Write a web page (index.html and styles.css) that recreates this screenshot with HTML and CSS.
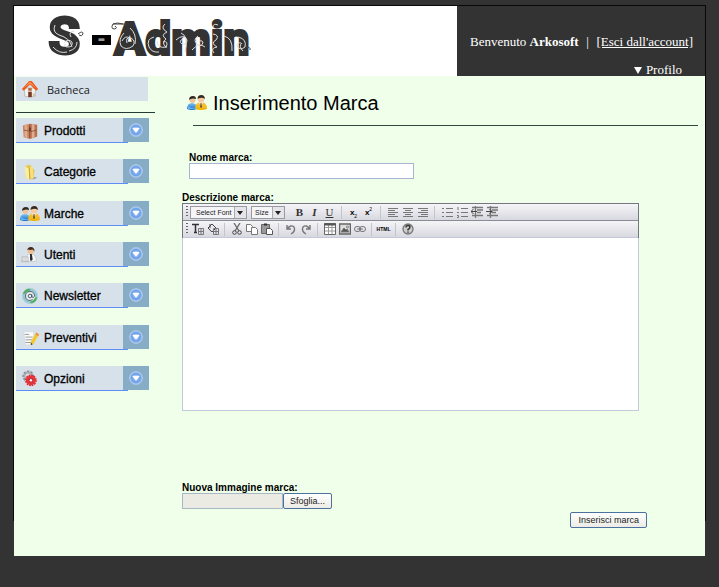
FILE: index.html
```html
<!DOCTYPE html>
<html lang="it">
<head>
<meta charset="utf-8">
<title>S-Admin</title>
<link rel="stylesheet" href="styles.css">
</head>
<body>
<svg class="sprite" aria-hidden="true">
  <defs>
    <linearGradient id="blue" x2="0" y2="1"><stop stop-color="#7cc4f4"/><stop offset="1" stop-color="#1668c0"/></linearGradient>
    <linearGradient id="gold" x2="0" y2="1"><stop stop-color="#f8c850"/><stop offset="1" stop-color="#f0b000"/></linearGradient>
    <radialGradient id="orb"><stop stop-color="#a8ccff"/><stop offset=".7" stop-color="#6c9fe8"/><stop offset="1" stop-color="#a4c4f0"/></radialGradient>
  </defs>
  <symbol id="people" viewBox="0 0 20 16">
    <path d="M0 14q0-6 5-6 5 0 5 6-5 2-10 0z" fill="url(#blue)"/>
    <circle cx="5.500" cy="5" r="3" fill="#efc49c"/><path d="M2 5q0-4 4-4 3 0 3 3-3-1-5 0-1 0-2 1z" fill="#302820"/>
    <path d="M8 14q0-7 6-7 6 0 6 7-6 2-12 0z" fill="url(#gold)"/>
    <path d="M12 7l2 5 2-5z" fill="#fff"/><path d="M13.500 8h1l.5 4-1 1-1-1z" fill="#6a5530"/>
    <circle cx="14" cy="4.500" r="3.200" fill="#f3cba5"/><path d="M10.500 4q0-4 4-4 3 0 3.500 4-3-2-5-1-1 0-2.500 1z" fill="#382a20"/>
    <path d="M1 11q3 3 8 2v1H1z" fill="#62b7f2"/>
  </symbol>
  <symbol id="down" viewBox="0 0 14 14">
    <circle cx="7" cy="7" r="6.300" fill="url(#orb)" stroke="#bcd4f5" stroke-width=".8"/>
    <path d="M3.500 5.500q0-.8 1-.8h5q1 0 1 .8L7 9.800z" fill="#fff"/>
  </symbol>
</svg>

<div class="frame">
  <header class="header">
    <h1 class="logo">
      <span class="logo-s">S</span><span class="logo-dash">-</span><span class="logo-word">Admin</span>
      <svg class="swirls" viewBox="0 0 206 40" aria-hidden="true">
        <path d="M7 8q-3 7 4 10 11 3 13 12M16 26q4-5 8-1 1 5-4 5-4 0-3-3M23 20q-3-5 3-6M21 34q8-2 8-9M5 30q6 7 14 5"/>
        <path d="M76 16q-6 6-3 13 5 5 12 0 3-5-2-8-6-1-4 5M82 11q7 6 5 16M82 21q-5-3-8 3"/>
        <path d="M106 20q-8 2-5 10 3 6 10 5M117 7q-5 4 2 8-7 3-1 7-5 4 0 8-8 2-9-6M115 25q6-2 3 6"/>
        <path d="M128 23q8-7 11 0 0 5-5 4-4-3 1-5M133 16q8 3 4 19M150 19q-6 4 0 9 4 2 5-3-2-3-4 0M144 33q7-8 13-3"/>
        <path d="M165 17q7 1 3 6-6 3 1 7-7 1-3 6M170 8q-5-2-5 2M176 19q9 2 8 15M190 20q9 2 7 10-5 4-8-1 0-4 4-3M195 34q-5-5-1-8"/>
        <path class="ink" d="M75 7q-6-2-10 0-3 5 2 5 3-1 0-3M30 17q5-4 5 0-1 3-4 1M198 30q5 0 4 3"/>
        <path class="ink" d="M65 7h14"/>
      </svg>
    </h1>
    <div class="account">
      <p class="welcome"><span>Benvenuto <strong>Arkosoft</strong></span><span>|</span><a href="#">[Esci dall'account]</a></p>
      <a class="profile" href="#"><svg viewBox="0 0 8 7"><path d="M0 0h8L4 7z" fill="#fff"/></svg>Profilo</a>
    </div>
  </header>

  <div class="body">
    <nav class="sidebar">
      <a class="home" href="#">
        <svg class="pic" viewBox="0 0 20 20"><path d="M4 9h12v9l-6 1-6-1z" fill="#f3f3ee" stroke="#aaa" stroke-width=".7"/><path d="M1 10L9 1h3l7 9-2 2-7-7-7 7z" fill="#f05a18"/><path d="M3 9l7-7 7 7-7-5z" fill="#ff9860"/><path d="M8 13h4v6H8z" fill="#7b3825"/><path d="M8 9h4v3H8z" fill="#b96a45"/><path d="M13 15h3v3l-3 1z" fill="#d6c4b0"/></svg>
        Bacheca</a>
      <ul class="menu">
        <li><a href="#"><svg class="pic" viewBox="0 0 20 20"><path d="M2 4l8-2v17l-7-2z" fill="#c98563"/><path d="M10 2l8 1v13l-8 3z" fill="#b87052"/><path d="M4 3l3-1v16l-3-1zM12 2l3 1v14l-3 1z" fill="#e0ad8c"/><path d="M9.500 3v15M3 9l6 1M10 11l7-2" stroke="#7a4430" stroke-width=".8"/><path d="M9 6h2v4H9z" fill="#6b3b2a"/></svg>Prodotti</a><button type="button" aria-label="Apri Prodotti"><svg><use href="#down"/></svg></button></li>
        <li><a href="#"><svg class="pic" viewBox="0 0 20 20"><path d="M13 15l5 1-3 2h-5z" fill="#9aa6ae"/><path d="M5 3l5-1 5 6-1 9-5 1-4-2z" fill="#e8c755"/><path d="M4 4l5 2v13l-4-3z" fill="#f9eda0"/><path d="M10 4l3 1 1 12-4 1z" fill="#f8df7c"/><path d="M9 5l1 13" stroke="#c79d32"/></svg>Categorie</a><button type="button" aria-label="Apri Categorie"><svg><use href="#down"/></svg></button></li>
        <li><a href="#"><svg class="pic"><use href="#people"/></svg>Marche</a><button type="button" aria-label="Apri Marche"><svg><use href="#down"/></svg></button></li>
        <li><a href="#"><svg class="pic" viewBox="0 0 20 20"><path d="M5 17q0-8 6-8 6 0 6 8z" fill="#f8f8f8" stroke="#bbb" stroke-width=".6"/><path d="M10 9h2l1 6-2 2-1-2z" fill="#29303a"/><circle cx="11" cy="5.500" r="3.400" fill="#edbd8e"/><path d="M7 5q0-4 4-4t4 5l-2-2q-3 1-5 0z" fill="#43291c"/><path d="M1 12h7v5H1z" fill="#dadde0" stroke="#aaa" stroke-width=".6"/><path d="M0 17h9v1H0z" fill="#bbb"/></svg>Utenti</a><button type="button" aria-label="Apri Utenti"><svg><use href="#down"/></svg></button></li>
        <li><a href="#"><svg class="pic" viewBox="0 0 20 20"><circle cx="10" cy="10" r="8.500" fill="#8fc8d4" stroke="#b5d5df"/><path d="M2 8q2-7 9-6l-3 4zM18 11q-1 7-8 7l2-5z" fill="#50b060"/><circle cx="10" cy="10" r="5.800" fill="#e8eeee"/><circle cx="10" cy="10" r="2" fill="none" stroke="#456"/><path d="M12 8v3q2 2 3-1 0-5-5-5t-5 5 5 5l3-1" fill="none" stroke="#456"/></svg>Newsletter</a><button type="button" aria-label="Apri Newsletter"><svg><use href="#down"/></svg></button></li>
        <li><a href="#"><svg class="pic" viewBox="0 0 20 20"><path d="M3 3h11v14l-9 1z" fill="#fafafa" stroke="#d0d0d0" stroke-width=".6"/><path d="M4 6h5M5 9h8M5 12h8M5 15h6" stroke="#8e9599"/><path d="M17 4l3 2-6 10-3 2v-4z" fill="#f7c62b"/><path d="M17 4l3 2-1 2-3-2z" fill="#ee8f45"/><path d="M11 15l2 2-2 1z" fill="#444"/></svg>Preventivi</a><button type="button" aria-label="Apri Preventivi"><svg><use href="#down"/></svg></button></li>
        <li><a href="#"><svg class="pic" viewBox="0 0 20 20"><circle cx="8" cy="7" r="5" fill="none" stroke="#888e94" stroke-width="3" stroke-dasharray="2.500 1.100"/><circle cx="8" cy="7" r="4" fill="none" stroke="#a8adb2" stroke-width="2"/><circle cx="11" cy="11.500" r="5.500" fill="#e8353c"/><circle cx="11" cy="11.500" r="5.800" fill="none" stroke="#e02830" stroke-width="1.500" stroke-dasharray="2 1"/><circle cx="11" cy="11.500" r="2" fill="#fff" stroke="#a81820"/></svg>Opzioni</a><button type="button" aria-label="Apri Opzioni"><svg><use href="#down"/></svg></button></li>
      </ul>
    </nav>

    <main class="content">
      <h2 class="title"><svg><use href="#people"/></svg>Inserimento Marca</h2>
      <form class="form">
        <div class="field name">
          <label for="nome">Nome marca:</label>
          <input id="nome" type="text">
        </div>
        <div class="field">
          <label for="descrizione">Descrizione marca:</label>
          <div class="editor">
            <div class="bar">
              <i class="grip"></i>
              <span class="drop font"><select aria-label="Font"><option>Select Font</option></select></span>
              <span class="drop size"><select aria-label="Size"><option>Size</option></select></span>
              <button type="button" class="serif"><b>B</b></button>
              <button type="button" class="serif"><em>I</em></button>
              <button type="button" class="serif"><u>U</u></button>
              <i class="sep"></i>
              <button type="button" class="script">x<sub>2</sub></button>
              <button type="button" class="script">x<sup>2</sup></button>
              <i class="sep"></i>
              <button type="button" aria-label="Sinistra"><svg viewBox="0 0 12 12"><path d="M1 2.500h10M1 4.500h7M1 6.500h10M1 8.500h7M1 10.500h10"/></svg></button>
              <button type="button" aria-label="Centro"><svg viewBox="0 0 12 12"><path d="M1 2.500h10M3 4.500h6M1 6.500h10M3 8.500h6M1 10.500h10"/></svg></button>
              <button type="button" aria-label="Destra"><svg viewBox="0 0 12 12"><path d="M1 2.500h10M4 4.500h7M1 6.500h10M4 8.500h7M1 10.500h10"/></svg></button>
              <i class="sep"></i>
              <button type="button" aria-label="Elenco"><svg viewBox="0 0 12 12"><path d="M1 2.500h2M5 2.500h7M1 6.500h2M5 6.500h7M1 10.500h2M5 10.500h7"/></svg></button>
              <button type="button" aria-label="Elenco numerato"><svg viewBox="0 0 12 12"><path d="M5 2.500h7M5 6.500h7M5 10.500h7M2 1v3M1 6.500h2M1 9.500h1.500v2H1"/></svg></button>
              <button type="button" aria-label="Riduci rientro"><svg viewBox="0 0 12 12"><path d="M1 1.500h11M6 4h6M6 6.500h4M1 9.500h11M4.500 0v12" stroke-width="1.300"/><path d="M0 5.500h6M2.500 3L0 5.500 2.500 8" stroke="#444"/></svg></button>
              <button type="button" aria-label="Aumenta rientro"><svg viewBox="0 0 12 12"><path d="M1 1.500h11M6 4h6M6 6.500h4M1 9.500h11M4.500 0v12" stroke-width="1.300"/><path d="M0 5.500h6M3.500 3L6 5.500 3.500 8" stroke="#444"/></svg></button>
            </div>
            <div class="bar">
              <i class="grip"></i>
              <button type="button" aria-label="Colore testo"><svg viewBox="0 0 12 12"><path d="M0 1.500h7M3.500 1v8M2 9.500h3" stroke="#333" stroke-width="1.500"/><path d="M6.500 5.500h5v6h-5zM6 8.500h6M9 5v7"/></svg></button>
              <button type="button" aria-label="Colore sfondo"><svg viewBox="0 0 12 12"><path d="M1 5l4-4 4 4-4 4zM3 1v4" stroke="#444"/><path d="M6.500 5.500h5v6h-5zM6 8.500h6M9 5v7"/></svg></button>
              <i class="sep"></i>
              <button type="button" aria-label="Taglia"><svg viewBox="0 0 12 12"><path d="M3 0l5 8M9 0L4 8" stroke="#666" stroke-width="1.300"/><circle cx="3.500" cy="9.500" r="1.800" stroke="#444"/><circle cx="8.500" cy="9.500" r="1.800" stroke="#444"/></svg></button>
              <button type="button" aria-label="Copia"><svg viewBox="0 0 12 12"><path d="M.5 1.500h4l2 2v5h-6z" fill="#fff"/><path d="M5.500 4.500h4l2 2v5h-6z" fill="#fff"/></svg></button>
              <button type="button" aria-label="Incolla"><svg viewBox="0 0 12 12"><path d="M.5 1.500h8v9h-8z" fill="#999" stroke="#666"/><path d="M3 1.500h3" stroke="#333" stroke-width="2"/><path d="M5.500 5.500h4l2 2v4h-6z" fill="#fff" stroke="#555"/></svg></button>
              <i class="sep"></i>
              <button type="button" aria-label="Annulla"><svg viewBox="0 0 12 12"><path d="M2 2v4h4M2 6q4-5 7-2 2 4-3 7" stroke-width="1.400"/></svg></button>
              <button type="button" aria-label="Ripeti"><svg viewBox="0 0 12 12"><path d="M10 2v4H6M10 6Q6 1 3 4q-2 4 3 7" stroke-width="1.400"/></svg></button>
              <i class="sep"></i>
              <button type="button" aria-label="Tabella"><svg viewBox="0 0 12 12"><path d="M.5.5h11v11H.5z" fill="#fff" stroke="#666"/><path d="M1 4.500h10M1 8h10M4.500 2v9M8 2v9" stroke="#999"/><path d="M0 1.500h12" stroke="#555" stroke-width="2"/></svg></button>
              <button type="button" aria-label="Immagine"><svg viewBox="0 0 12 12"><path d="M.5 1h11v10H.5z" fill="#ddd" stroke="#666" stroke-width="1.500"/><path d="M2 9l3-4 2 2 1-1 2 3z" fill="#555"/><circle cx="8.500" cy="4" r="1" fill="#fff"/></svg></button>
              <button type="button" aria-label="Link"><svg viewBox="0 0 12 12"><rect x=".5" y="3.500" width="6" height="5" rx="2.500"/><rect x="5.500" y="3.500" width="6" height="5" rx="2.500"/><path d="M3 6h6"/></svg></button>
              <i class="sep"></i>
              <button type="button" class="html">HTML</button>
              <i class="sep"></i>
              <button type="button" aria-label="Aiuto"><svg viewBox="0 0 12 12"><circle cx="6" cy="6" r="5" fill="#ccc" stroke="#777" stroke-width="1.300"/><path d="M4 4.500q0-2 2-2t2 1.500-2 2.500v1M6 8.500v1.300" stroke="#333" stroke-width="1.400"/></svg></button>
            </div>
            <textarea id="descrizione"></textarea>
          </div>
        </div>
        <div class="field upload">
          <label for="immagine">Nuova Immagine marca:</label>
          <div class="file"><input id="immagine" type="text" readonly><button type="button" class="btn">Sfoglia...</button></div>
        </div>
        <div class="actions"><button type="submit" class="btn">Inserisci marca</button></div>
      </form>
    </main>
  </div>
</div>
</body>
</html>
```
FILE: styles.css
```css
* { box-sizing: border-box; }

body {
  margin: 0;
  padding: 5px 13px 24px;
  background: #333;
  color: #000;
  font-family: "Liberation Sans", Arial, sans-serif;
}

h1, h2, p, ul { margin: 0; padding: 0; }
ul { list-style: none; }
button { padding: 0; border: 0; background: none; font-family: inherit; color: inherit; }
.sprite { position: absolute; width: 0; height: 0; }

.frame { position: relative; padding: 1px; }
.frame::before {
  content: "";
  position: absolute;
  inset: 0 0 36px;
  border: 1px solid #080808;
  border-bottom: 0;
  pointer-events: none;
}

.header { display: flex; height: 70px; }

.logo {
  position: relative;
  flex: 1;
  display: flex;
  align-items: flex-start;
  padding-left: 34px;
  background: #fff;
  color: #333;
  font-family: Roboto, sans-serif;
  font-weight: 900;
}
.logo-s, .logo-word { -webkit-text-stroke: 2px #333; }
.logo-s { width: 44px; font-size: 52px; line-height: 62px; }
.logo-dash {
  width: 19px;
  height: 10px;
  margin-top: 29px;
  background: #000;
  color: #999;
  font-size: 20px;
  line-height: 8px;
  text-align: center;
}
.logo-word { margin-left: 3px; font-size: 46px; line-height: 66px; }
.swirls {
  position: absolute;
  left: 34px;
  top: 11px;
  width: 206px;
  height: 40px;
  fill: none;
  stroke: #ddd;
  stroke-width: 1;
}
.swirls .ink { stroke: #444; }

.account {
  width: 248px;
  padding: 28px 12px 0 13px;
  color: #fff;
  font-family: "Liberation Serif", "Times New Roman", serif;
  font-size: 13px;
  line-height: 16px;
  white-space: nowrap;
}
.account a { color: #fff; }
.welcome { display: flex; justify-content: space-between; }
.profile {
  display: flex;
  align-items: center;
  justify-content: flex-end;
  gap: 4px;
  margin: 12px 11px 0 0;
  text-decoration: none;
}
.profile svg { width: 8px; height: 7px; }

.body {
  display: flex;
  min-height: 480px;
  padding-left: 2px;
  background: #efffea;
}

.sidebar { width: 139px; flex: none; }
.home, .menu a {
  display: flex;
  align-items: center;
  color: #000;
  background: #d6e1ea;
  text-decoration: none;
}
.home {
  width: 132px;
  height: 24px;
  margin-top: 1px;
  padding-left: 4px;
  gap: 7px;
  color: #222;
  font-family: "Open Sans", sans-serif;
  font-size: 11px;
}
.pic { flex: none; width: 20px; height: 18px; }
.menu {
  display: grid;
  align-content: space-between;
  height: 279px;
  margin-top: 11px;
  padding-top: 5px;
  border-top: 1px solid #243c34;
}
.menu li {
  display: grid;
  grid-template-columns: 107px 26px;
  height: 25px;
  background: linear-gradient(#5f8df8, #5f8df8) 0 100% / 112px 1px no-repeat;
}
.menu a {
  height: 24px;
  padding: 2px 0 0 4px;
  gap: 4px;
  font-size: 12px;
  -webkit-text-stroke: 0.3px #000;
}
.menu button {
  display: grid;
  place-items: center;
  height: 24px;
  background: #87adc6;
}
.menu button svg { width: 14px; height: 14px; }

.content { flex: 1; min-width: 0; padding: 17px 7px 0 27px; }
.title {
  display: flex;
  align-items: center;
  gap: 6px;
  height: 33px;
  margin-left: 11px;
  margin-bottom: 26px;
  padding-bottom: 12px;
  font-size: 20px;
  font-weight: 400;
  line-height: 20px;
  border-bottom: 1px solid #30483e;
}
.title svg { width: 20px; height: 16px; margin-left: -6px; }

.form { width: 465px; max-width: 100%; }
.field label { display: block; font-size: 10px; line-height: 11px; font-weight: 700; }
.field input {
  display: block;
  height: 16px;
  border: 1px solid #a7b5d0;
  background: #fff;
}
.name { margin: 0 0 13px 7px; }
.name input { width: 225px; }

.editor { width: 457px; border: 1px solid #747780; border-width: 1px 1px 0; }
.bar {
  display: flex;
  align-items: center;
  height: 17px;
  padding-left: 3px;
  background: linear-gradient(#f5f5f8, #d8d8e0);
  border-bottom: 1px solid #8b8b94;
}
.bar + .bar { border-bottom-color: #c4c8d8; }
.grip {
  width: 2px;
  height: 12px;
  margin-right: 2px;
  background: repeating-linear-gradient(#666 0 1px, transparent 1px 3px);
}
.bar button { width: 15px; height: 15px; display: grid; place-items: center; }
.bar svg { width: 12px; height: 12px; fill: none; stroke: #777; }
.bar .sep { flex: none; width: 9px; height: 13px; background: linear-gradient(#c4c4cc, #c4c4cc) 4px 0 / 1px 100% no-repeat; }
.bar .serif { font: 11px/12px "Liberation Serif", serif; color: #333; }
.serif em { font-weight: 700; }
.bar .script { display: block; font-size: 8px; line-height: 13px; font-weight: 700; }
.script sub, .script sup { font-size: 5px; line-height: 0; font-weight: 400; }
.bar .html { font-size: 5px; font-weight: 700; }

.drop { position: relative; height: 13px; border: 1px solid #9999a2; background: #f5f5f8; }
.drop::after {
  content: "";
  position: absolute;
  right: 3px;
  top: 4px;
  border: 3px solid transparent;
  border-top: 4px solid #222;
  border-bottom: 0;
}
.drop select {
  display: block;
  width: 100%;
  height: 11px;
  padding: 0 0 0 5px;
  border: 0;
  appearance: none;
  background: linear-gradient(90deg, #aaa 1px, #e4e4e9 1px) 100% 0 / 12px 100% no-repeat;
  color: #222;
  font: 7px/11px "Liberation Sans", sans-serif;
}
.font { width: 57px; margin-right: 4px; }
.size { width: 34px; margin-right: 7px; }
.drop.size select { padding-left: 3px; }

.editor textarea {
  display: block;
  width: 457px;
  height: 173px;
  margin: 0 -1px;
  border: 1px solid #c0cadd;
  border-top: 0;
  background: #fff;
  resize: none;
}

.upload { margin-top: 71px; }
.file { display: flex; }
.file input { width: 101px; background: #ebebe4; border-color: #a7b9c2; }
.btn {
  height: 16px;
  padding: 0 6px;
  border: 1px solid #4b719c;
  border-radius: 2px;
  background: linear-gradient(#fff, #ecebe5);
  color: #222;
  font-size: 9px;
  line-height: 14px;
}
.actions { display: flex; justify-content: flex-end; margin-top: 3px; }
.actions .btn { padding: 0 7px; }
```
